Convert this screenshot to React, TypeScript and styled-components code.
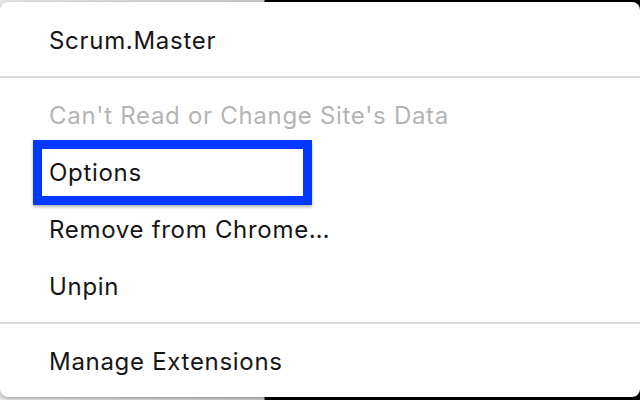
import styled, { createGlobalStyle } from 'styled-components'

const GlobalStyle = createGlobalStyle`
  html,
  body {
    margin: 0;
    height: 400px;
    overflow: hidden;
    background: linear-gradient(to right, #e4e4e4 0, #c9c9c9 264px, #000 265px, #000 100%);
  }

  body {
    font-family: Inter, 'Noto Sans', 'Liberation Sans', sans-serif;
  }
`

type MenuEntry = {
  label: string
  disabled?: boolean
  highlighted?: boolean
}

const MAIN_ENTRIES: MenuEntry[] = [
  { label: "Can't Read or Change Site's Data", disabled: true },
  { label: 'Options', highlighted: true },
  { label: 'Remove from Chrome…' },
  { label: 'Unpin' },
]

export default function App() {
  return (
    <>
      <GlobalStyle />
      <Menu>
        <Item>Scrum.Master</Item>
        <Separator />
        {MAIN_ENTRIES.map(entry => (
          <Item key={entry.label} $disabled={entry.disabled}>
            {entry.label}
            {entry.highlighted && <Highlight />}
          </Item>
        ))}
        <Separator />
        <Item>Manage Extensions</Item>
      </Menu>
    </>
  )
}

const Menu = styled.div`
  box-sizing: border-box;
  display: flex;
  flex-direction: column;
  height: 395px;
  margin-top: 2px;
  padding: 10px 0 7px;
  background: #fff;
  border-radius: 8px;
  box-shadow: 0 1px 3px rgba(0, 0, 0, 0.35);
`

const Item = styled.div<{ $disabled?: boolean }>`
  position: relative;
  display: flex;
  align-items: center;
  height: 57px;
  flex-shrink: 0;
  padding-left: 49px;
  font-size: 24px;
  letter-spacing: 0.7px;
  color: ${p => (p.$disabled ? '#b4b4b4' : '#161616')};
`

const Separator = styled.div`
  height: 2px;
  margin: 7px 0 9px;
  background: #dadada;
  flex-shrink: 0;
`

const Highlight = styled.span`
  position: absolute;
  top: -4px;
  bottom: -4px;
  left: 33px;
  width: 279px;
  box-sizing: border-box;
  border: 9px solid #0038ff;
  box-shadow: 0 2px 3px rgba(0, 0, 0, 0.3);
`
